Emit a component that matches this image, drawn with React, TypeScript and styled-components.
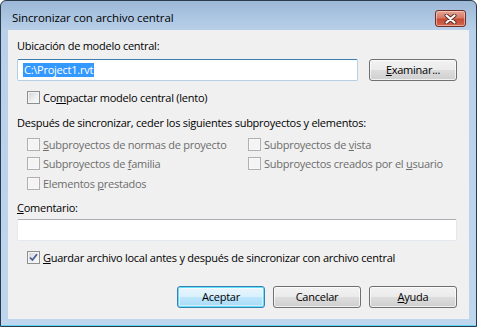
import styled, { createGlobalStyle, css } from 'styled-components';

// Diálogo "Sincronizar con archivo central" (estilo Windows 7)

const GlobalStyle = createGlobalStyle`
  html, body {
    margin: 0;
    padding: 0;
    background: #ffffff;
  }
  body {
    font-family: 'Open Sans', 'Liberation Sans', sans-serif;
    font-size: 11px;
    letter-spacing: -0.25px;
    color: #000;
  }
`;

const Window = styled.div`
  width: 477px;
  height: 327px;
  box-sizing: border-box;
  border: 1px solid #2b3a4c;
  border-radius: 6px 6px 0 0;
  background: linear-gradient(#9cb8d7, #b8d0e9 29px, #bed6ee);
  display: flex;
  flex-direction: column;
  padding: 0 7px 7px;
  box-shadow: inset 0 -1px 0 #5fd3ef;
`;

const TitleBar = styled.div`
  height: 29px;
  display: flex;
  align-items: flex-start;
  padding: 0 3px 0 4px;
`;

const Title = styled.div`
  margin-top: 9px;
  font-size: 11.5px;
  letter-spacing: -0.1px;
  line-height: 16px;
  color: #000;
`;

const CloseBtn = styled.div`
  margin-left: auto;
  margin-top: 9px;
  width: 29px;
  height: 15px;
  border: 1px solid #6e2f2c;
  border-radius: 3px;
  background: linear-gradient(#e4a594, #d67a66 45%, #c44b34 55%, #d1684f);
  box-shadow: inset 0 0 0 1px rgba(255, 220, 210, 0.55);
  display: flex;
  align-items: center;
  justify-content: center;
`;

const Client = styled.div`
  flex: 1;
  background: #f0f0f0;
  padding: 8px 12px 0 9px;
  display: flex;
  flex-direction: column;
`;

const Label = styled.div<{ $top?: number }>`
  line-height: 16px;
  margin-top: ${(p) => p.$top ?? 0}px;
  white-space: nowrap;
`;

const FlexRow = styled.div<{ $top?: number }>`
  display: flex;
  align-items: center;
  margin-top: ${(p) => p.$top ?? 0}px;
`;

const TextBox = styled.div<{ $focus?: boolean; $width?: number }>`
  box-sizing: border-box;
  height: 22px;
  width: ${(p) => (p.$width ? `${p.$width}px` : '100%')};
  background: #fff;
  border: 1px solid #e3e9ef;
  border-top-color: #abadb3;
  border-radius: 2px;
  display: flex;
  align-items: center;
  padding-left: 5px;
  ${(p) =>
    p.$focus &&
    css`
      border-color: #b5cfe7;
      border-top-color: #3d7bad;
    `}
`;

const Selected = styled.span`
  background: #3399ff;
  color: #fff;
  line-height: 14px;
  padding: 0 1px;
  white-space: nowrap;
`;

const Button = styled.div<{ $default?: boolean }>`
  box-sizing: border-box;
  width: 88px;
  height: 22px;
  border: 1px solid #707070;
  border-radius: 3px;
  background: linear-gradient(#f2f2f2, #ebebeb 48%, #dddddd 52%, #cfcfcf);
  box-shadow: inset 0 0 0 1px rgba(255, 255, 255, 0.7);
  display: flex;
  align-items: center;
  justify-content: center;
  line-height: 16px;
  ${(p) =>
    p.$default &&
    css`
      border-color: #3c7fb1;
      background: linear-gradient(#eaf6fd, #d9f0fc 48%, #bee6fd 52%, #a7d9f5);
      box-shadow: inset 0 0 0 1px #5ee0fb, inset 0 0 0 2px rgba(255, 255, 255, 0.5);
    `}
`;

const ButtonBar = styled.div`
  display: flex;
  justify-content: flex-end;
  gap: 8px;
  margin-top: 18px;
`;

const CheckRow = styled.label<{ $disabled?: boolean }>`
  display: flex;
  align-items: center;
  gap: 3px;
  height: 19.5px;
  white-space: nowrap;
  color: ${(p) => (p.$disabled ? '#6d6d6d' : '#000')};
`;

const Box = styled.span<{ $disabled?: boolean }>`
  box-sizing: border-box;
  width: 13px;
  height: 13px;
  flex: none;
  border: 1px solid ${(p) => (p.$disabled ? '#b1b1b1' : '#8e8f8f')};
  background: ${(p) =>
    p.$disabled
      ? '#f4f4f4'
      : 'linear-gradient(135deg, #cfd2d6, #eceef0 55%, #fbfbfb)'};
  box-shadow: inset 0 0 0 1px ${(p) => (p.$disabled ? '#f7f7f7' : '#f4f4f4')};
  display: flex;
  align-items: center;
  justify-content: center;
`;

const Indent = styled.div<{ $top?: number }>`
  padding-left: 10px;
  margin-top: ${(p) => p.$top ?? 0}px;
`;

const OptionGrid = styled.div`
  display: grid;
  grid-template-columns: 221px 1fr;
  padding-left: 10px;
  margin-top: 4px;
`;

const Check = ({
  label,
  disabled,
  checked
}: {
  label: React.ReactNode;
  disabled?: boolean;
  checked?: boolean;
}) => (
  <CheckRow $disabled={disabled}>
    <Box $disabled={disabled}>
      {checked && (
        <svg width='9' height='9' viewBox='0 0 9 9'>
          <path d='M1 4.5 L3.4 7 L8 1.3' fill='none' stroke='#4a5b8f' strokeWidth='1.8' />
        </svg>
      )}
    </Box>
    <span>{label}</span>
  </CheckRow>
);

const App = () => {
  return (
    <>
      <GlobalStyle />
      <Window>
        <TitleBar>
          <Title>Sincronizar con archivo central</Title>
          <CloseBtn>
            <svg width='13' height='10' viewBox='0 0 13 10'>
              <path d='M2.5 1.5 L10.5 8.5 M10.5 1.5 L2.5 8.5' stroke='#5a2a26' strokeWidth='4' strokeLinecap='round' />
              <path d='M2.5 1.5 L10.5 8.5 M10.5 1.5 L2.5 8.5' stroke='#ffffff' strokeWidth='2.2' strokeLinecap='round' />
            </svg>
          </CloseBtn>
        </TitleBar>
        <Client>
          <Label>Ubicación de modelo central:</Label>
          <FlexRow $top={5}>
            <TextBox $focus $width={341}>
              <Selected>C:\Project1.rvt</Selected>
            </TextBox>
            <Button style={{ marginLeft: 11 }}>
              <span>
                <u>E</u>xaminar...
              </span>
            </Button>
          </FlexRow>
          <Indent $top={7}>
            <Check
              label={
                <>
                  Co<u>m</u>pactar modelo central (lento)
                </>
              }
            />
          </Indent>
          <Label $top={7}>Después de sincronizar, ceder los siguientes subproyectos y elementos:</Label>
          <OptionGrid>
            <Check
              disabled
              label={
                <>
                  <u>S</u>ubproyectos de normas de proyecto
                </>
              }
            />
            <Check
              disabled
              label={
                <>
                  Subproyectos de <u>v</u>ista
                </>
              }
            />
            <Check
              disabled
              label={
                <>
                  Subproyectos de <u>f</u>amilia
                </>
              }
            />
            <Check
              disabled
              label={
                <>
                  Subproyectos creados por el <u>u</u>suario
                </>
              }
            />
            <Check
              disabled
              label={
                <>
                  Elementos <u>p</u>restados
                </>
              }
            />
          </OptionGrid>
          <Label $top={7}>
            <u>C</u>omentario:
          </Label>
          <FlexRow $top={3}>
            <TextBox />
          </FlexRow>
          <Indent $top={7}>
            <Check
              checked
              label={
                <>
                  <u>G</u>uardar archivo local antes y después de sincronizar con archivo central
                </>
              }
            />
          </Indent>
          <ButtonBar>
            <Button $default>Aceptar</Button>
            <Button>Cancelar</Button>
            <Button>
              <span>
                <u>A</u>yuda
              </span>
            </Button>
          </ButtonBar>
        </Client>
      </Window>
    </>
  );
};

export default App;
